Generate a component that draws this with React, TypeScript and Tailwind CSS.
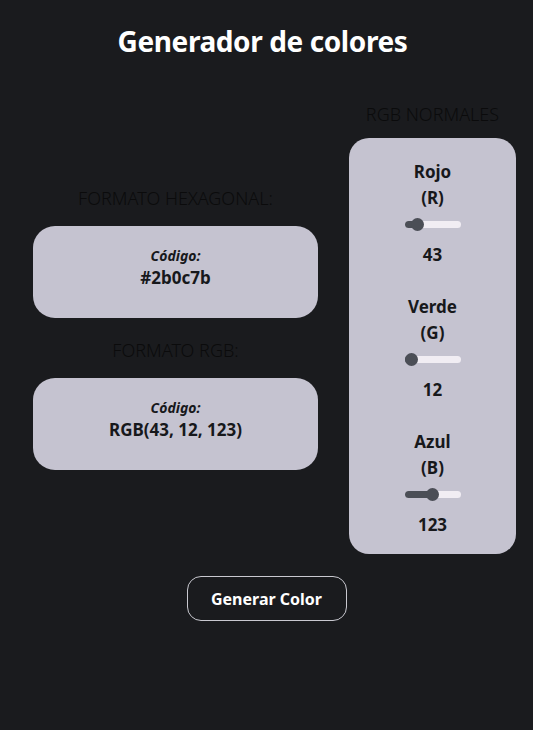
import React from "react";

function Slider({ value }: { value: number }) {
  const center = 4.7 + 0.189 * value;
  return (
    <div className="relative h-[13px] w-[56px] my-[7px]">
      <div className="absolute left-0 right-0 top-[3px] h-[7px] rounded-full bg-[#f1edf3]" />
      <div className="absolute left-0 top-[3px] h-[7px] rounded-full bg-[#4b4e56]" style={{ width: `${center}px` }} />
      <div
        className="absolute top-0 h-[13px] w-[13px] rounded-full bg-[#4b4e56]"
        style={{ left: `${center - 6.5}px` }}
      />
    </div>
  );
}

function Channel({ name, letter, value }: { name: string; letter: string; value: number }) {
  return (
    <div className="flex flex-col items-center text-[#17181b] font-bold text-[17px] leading-[26px]">
      <div>{name}</div>
      <div>({letter})</div>
      <Slider value={value} />
      <div className="mt-[4px]">{value}</div>
    </div>
  );
}

function Card({ code }: { code: string }) {
  return (
    <div className="w-[285px] h-[92px] rounded-[22px] bg-[#c5c3d0] flex flex-col items-center justify-center text-[#17181b]">
      <div className="italic font-bold text-[14px] leading-[20px] -mt-[9px]">Código:</div>
      <div className="font-bold text-[17px] leading-[24px]">{code}</div>
    </div>
  );
}

export default function App() {
  const r = 43, g = 12, b = 123;
  return (
    <div className="min-h-[730px] w-full bg-[#1a1b1e] flex flex-col" style={{ fontFamily: '"Noto Sans", "Open Sans", sans-serif' }}>
      <h1 className="text-white font-bold text-[28px] leading-[40px] text-center mt-[21px] pr-[8px] tracking-[-0.4px]">Generador de colores</h1>
      <div className="flex items-center pl-[33px] gap-[31px] mt-[43px]">
        <div className="flex flex-col items-center">
          <div className="text-[#0b0b0c] font-light text-[18px] leading-[20px] mb-[18px]">FORMATO HEXAGONAL:</div>
          <Card code="#2b0c7b" />
          <div className="text-[#0b0b0c] font-light text-[18px] leading-[20px] mt-[22px] mb-[18px]">FORMATO RGB:</div>
          <Card code={`RGB(${r}, ${g}, ${b})`} />
        </div>
        <div className="flex flex-col items-center">
          <div className="text-[#0b0b0c] font-light text-[18px] leading-[20px] mb-[14px]">RGB NORMALES</div>
          <div className="w-[167px] h-[416px] rounded-[20px] bg-[#c5c3d0] flex flex-col items-center pt-[21px] gap-[26px]">
            <Channel name="Rojo" letter="R" value={r} />
            <Channel name="Verde" letter="G" value={g} />
            <Channel name="Azul" letter="B" value={b} />
          </div>
        </div>
      </div>
      <div className="flex justify-center mt-[22px]">
        <button className="w-[160px] h-[45px] rounded-[14px] border border-[#c9c9d0] text-white font-bold text-[16px]">Generar Color</button>
      </div>
    </div>
  );
}
